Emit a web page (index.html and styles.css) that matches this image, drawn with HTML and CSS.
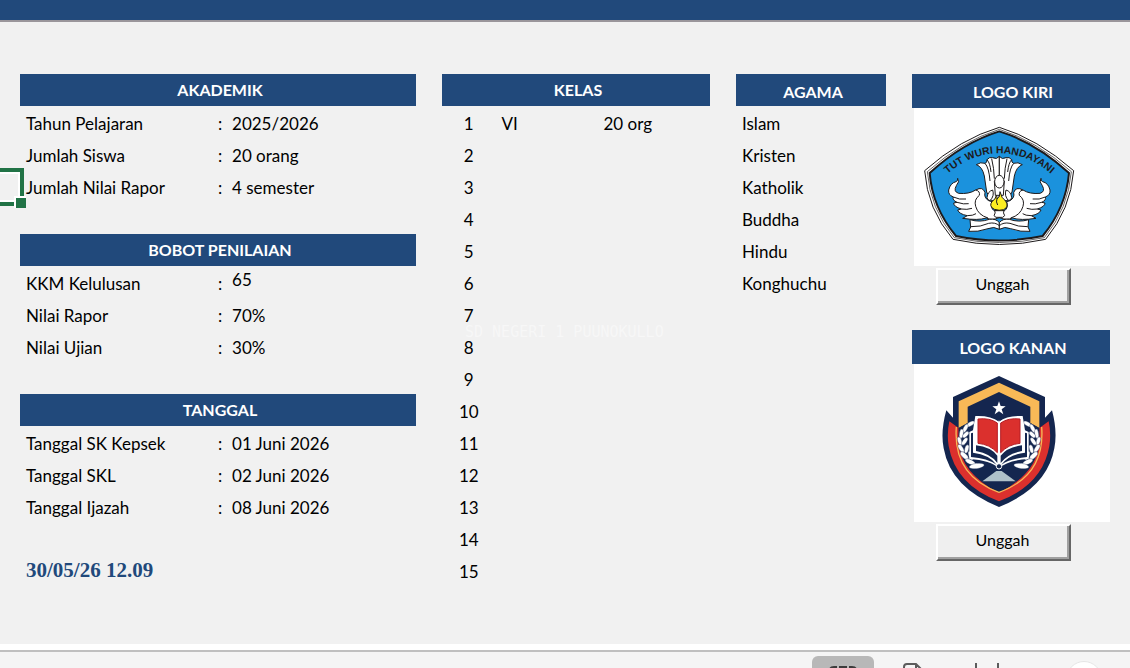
FILE: index.html
```html
<!DOCTYPE html>
<html lang="id">
<head>
  <meta charset="UTF-8" />
  <meta name="viewport" content="width=device-width, initial-scale=1.0"/>
  <title>Data Sekolah</title>
  <link rel="stylesheet" href="styles.css">
</head>
<body>
  <div class="topbar"></div>

  <main class="sheet">
    <div class="watermark">SD NEGERI 1 PUUNOKULLO</div>
    <div class="cell-cursor"><span class="handle"></span></div>

    <div class="column">
      <section>
        <h2>AKADEMIK</h2>
        <table class="data">
          <tr><th>Tahun Pelajaran</th><td class="sep">:</td><td>2025/2026</td></tr>
          <tr><th>Jumlah Siswa</th><td class="sep">:</td><td>20 orang</td></tr>
          <tr><th>Jumlah Nilai Rapor</th><td class="sep">:</td><td>4 semester</td></tr>
        </table>
      </section>
      <section>
        <h2>BOBOT PENILAIAN</h2>
        <table class="data">
          <tr><th>KKM Kelulusan</th><td class="sep">:</td><td class="raised">65</td></tr>
          <tr><th>Nilai Rapor</th><td class="sep">:</td><td>70%</td></tr>
          <tr><th>Nilai Ujian</th><td class="sep">:</td><td>30%</td></tr>
        </table>
      </section>
      <section>
        <h2>TANGGAL</h2>
        <table class="data">
          <tr><th>Tanggal SK Kepsek</th><td class="sep">:</td><td>01 Juni 2026</td></tr>
          <tr><th>Tanggal SKL</th><td class="sep">:</td><td>02 Juni 2026</td></tr>
          <tr><th>Tanggal Ijazah</th><td class="sep">:</td><td>08 Juni 2026</td></tr>
        </table>
      </section>
      <p class="now">30/05/26 12.09</p>
    </div>

    <section>
      <h2>KELAS</h2>
      <table class="data kelas">
        <tr><th>1</th><td>VI</td><td class="total">20 org</td></tr>
        <tr><th>2</th><td></td><td></td></tr>
        <tr><th>3</th><td></td><td></td></tr>
        <tr><th>4</th><td></td><td></td></tr>
        <tr><th>5</th><td></td><td></td></tr>
        <tr><th>6</th><td></td><td></td></tr>
        <tr><th>7</th><td></td><td></td></tr>
        <tr><th>8</th><td></td><td></td></tr>
        <tr><th>9</th><td></td><td></td></tr>
        <tr><th>10</th><td></td><td></td></tr>
        <tr><th>11</th><td></td><td></td></tr>
        <tr><th>12</th><td></td><td></td></tr>
        <tr><th>13</th><td></td><td></td></tr>
        <tr><th>14</th><td></td><td></td></tr>
        <tr><th>15</th><td></td><td></td></tr>
      </table>
    </section>

    <section>
      <h2 class="low">AGAMA</h2>
      <ul class="agama">
        <li>Islam</li>
        <li>Kristen</li>
        <li>Katholik</li>
        <li>Buddha</li>
        <li>Hindu</li>
        <li>Konghuchu</li>
      </ul>
    </section>

    <div class="logos">
      <section>
        <h2 class="low">LOGO KIRI</h2>
        <div class="logo-box">
          <svg viewBox="30 126 588 474" preserveAspectRatio="xMinYMin meet" role="img" aria-label="Tut Wuri Handayani">
            <defs>
              <path id="arc" d="M118,335 Q195,262 286,262 Q377,262 454,335"/>
              <g id="half">
                <!-- tail feathers -->
                <path d="M286,271 Q278,282 266,275 Q256,272 249,281 Q250,290 243,292 Q230,287 217,296 Q235,302 241,330 L248,378 L262,404 L286,404 Z"/>
                <path fill="none" d="M243,292 Q255,305 258,345 M263,278 Q270,306 271,338 M249,281 Q258,290 261,318"/>
                <path d="M266,372 Q251,376 249,395 Q250,402 258,404 Q272,390 266,372 Z"/>
                <!-- wing -->
                <path d="M161,337 Q168,347 157,359 Q147,377 164,382 Q195,385 215,372 Q237,360 243,380 Q239,395 254,404 L264,407 Q258,425 270,434 L286,432 L286,455 Q263,464 247,456 Q222,464 176,457 L190,449 Q165,444 161,432 L172,429 Q149,422 149,411 L159,409 Q144,402 148,393 Q132,387 134,372 Q139,351 156,347 Q163,344 161,337 Z"/>
                <path fill="none" d="M148,393 Q166,402 186,399 M159,409 Q180,416 194,413 M172,429 Q189,432 204,427 M190,449 Q208,449 216,443 M215,372 Q229,375 226,388 Q209,401 215,421 Q222,447 252,456"/>
                <!-- book -->
                <path d="M198,461 Q228,470 256,460 Q276,457 286,470 L286,490 Q270,480 252,488 Q220,499 194,496 L200,483 Z"/>
                <path fill="none" d="M201,482 Q230,483 254,472 Q274,468 286,479"/>
              </g>
            </defs>
            <g class="crest">
              <path fill="#fff" stroke-width="3" d="M286,184 Q400,218 509,314 Q500,430 425,520 Q286,551 147,520 Q70,430 62,314 Q170,218 286,184 Z"/>
              <path fill="#fff" stroke-width="2" d="M286,190 Q398,225 502,317 Q493,428 421,515 Q286,544 151,515 Q78,428 70,317 Q174,225 286,190 Z"/>
              <path fill="#1b92dd" stroke-width="6" d="M286,196 Q396,230 495,321 Q486,425 416,510 Q286,537 156,510 Q85,425 77,321 Q176,230 286,196 Z"/>
              <text class="motto"><textPath href="#arc" startOffset="50%" text-anchor="middle">TUT WURI HANDAYANI</textPath></text>
              <g fill="#fff" stroke-width="3">
                <use href="#half"/>
                <use href="#half" transform="matrix(-1 0 0 1 572 0)"/>
                <path d="M271,345 L274,388 L298,388 L301,345 Z"/>
                <ellipse cx="286" cy="347" rx="14" ry="19"/>
                <path d="M272,434 Q276,440 270,449 L276,454 H296 L302,449 Q296,440 300,434 Z"/>
                <path fill="#fcee21" d="M288,377 Q292,397 305,405 Q316,423 299,431 Q286,435 271,430 Q253,421 265,405 Q274,402 277,388 Q280,393 279,399 Q289,393 288,377 Z"/>
                <path fill="none" d="M279,398 Q275,408 281,417"/>
              </g>
            </g>
          </svg>
        </div>
        <button type="button" class="upload">Unggah</button>
      </section>

      <section>
        <h2 class="low">LOGO KANAN</h2>
        <div class="logo-box">
          <svg viewBox="30 132 588 474" preserveAspectRatio="xMinYMin meet" role="img" aria-label="Logo sekolah">
            <defs>
              <g id="laurel">
                <path fill="none" stroke="#fff" stroke-width="4" d="M205,309 Q166,330 169,370 Q175,423 232,438"/>
                <g fill="#fff" stroke="#14264f" stroke-width="1">
                  <ellipse cx="199" cy="312" rx="14" ry="6" transform="rotate(-30 199 312)"/>
                  <ellipse cx="184" cy="325" rx="14" ry="6" transform="rotate(-62 184 325)"/>
                  <ellipse cx="172" cy="341" rx="14" ry="6" transform="rotate(-82 172 341)"/>
                  <ellipse cx="185" cy="344" rx="12" ry="6" transform="rotate(-45 185 344)"/>
                  <ellipse cx="167" cy="363" rx="13" ry="6" transform="rotate(72 167 363)"/>
                  <ellipse cx="182" cy="364" rx="13" ry="6" transform="rotate(-55 182 364)"/>
                  <ellipse cx="171" cy="385" rx="14" ry="6" transform="rotate(58 171 385)"/>
                  <ellipse cx="188" cy="387" rx="13" ry="6" transform="rotate(-75 188 387)"/>
                  <ellipse cx="181" cy="407" rx="15" ry="7" transform="rotate(42 181 407)"/>
                  <ellipse cx="200" cy="407" rx="14" ry="6" transform="rotate(70 200 407)"/>
                  <ellipse cx="199" cy="426" rx="17" ry="7" transform="rotate(25 199 426)"/>
                  <ellipse cx="218" cy="438" rx="23" ry="8" transform="rotate(-8 218 438)"/>
                </g>
              </g>
              <g id="page">
                <path fill="#fff" d="M285,445 Q260,421 196,417 L196,336 L207,331 L214,288 Q260,286 285,305 Z"/>
                <path fill="#14264f" d="M201,340 L207,338 L207,398 Q256,404 278,434 Q250,415 201,411 Z M216,376 Q260,381 280,407 L280,429 Q260,401 216,393 Z"/>
                <path fill="#db302d" stroke="#b51f27" stroke-width="3" d="M222,297 Q258,293 280,309 L280,398 Q257,373 222,370 Z"/>
              </g>
            </defs>
            <path fill="#14264f" d="M285,168 L423,231 V293 L444,271 Q461,335 451,385 Q430,503 285,561 Q140,503 119,385 Q109,335 127,271 L147,293 V231 Z"/>
            <path fill="#db302d" d="M136,304 L164,324 V365 Q178,466 285,518 Q392,466 406,365 V324 L434,304 Q442,342 436,378 Q416,494 285,544 Q154,494 134,378 Q128,342 136,304 Z"/>
            <path fill="#f8b957" d="M285,188 L406,244 V324 L379,309 V260 L285,216 L191,260 V309 L164,324 V244 Z"/>
            <path fill="none" stroke="#f8b957" stroke-width="4" d="M157,321 Q146,467 285,517 Q424,467 413,321"/>
            <path fill="#14264f" d="M164,324 L191,309 L285,290 L379,309 L406,324 V365 Q399,463 285,514 Q171,463 164,365 Z"/>
            <path fill="#fff" d="M285,244 L290,258 L305,259 L293,268 L298,283 L285,274 L272,283 L277,268 L265,259 L280,258 Z"/>
            <use href="#laurel"/>
            <use href="#laurel" transform="matrix(-1 0 0 1 570 0)"/>
            <use href="#page"/>
            <use href="#page" transform="matrix(-1 0 0 1 570 0)"/>
            <path fill="none" stroke="#fff" stroke-width="3" d="M285,302 V440"/>
            <circle cx="285" cy="439" r="8" fill="#14264f" stroke="#fff" stroke-width="3"/>
            <path fill="#afc1ca" d="M277,453 H293 L335,484 H235 Z"/>
          </svg>
        </div>
        <button type="button" class="upload">Unggah</button>
      </section>
    </div>
  </main>

  <footer class="statusbar">
    <button type="button" class="view active" aria-label="Normal">
      <svg width="28" height="20" viewBox="0 0 28 20"><path fill="#3c3c3c" d="M5,0 H8 V4 H0 Q0,0 5,0 Z M10,0 H18 V4 H10 Z M20,0 H23 Q28,0 28,4 H20 Z M0,4 H8 V12 H0 Z M10,4 H18 V12 H10 Z M20,4 H28 V12 H20 Z"/></svg>
    </button>
    <button type="button" class="view page" aria-label="Tata Letak Halaman">
      <svg width="22" height="24" viewBox="0 0 22 24"><path fill="none" stroke="#5c5c5c" stroke-width="2" d="M1,24 V4 Q1,1 4,1 H13 L20,8 V24 M13,1 V8 H20"/></svg>
    </button>
    <button type="button" class="view break" aria-label="Pratinjau Hentian Halaman">
      <svg width="26" height="24" viewBox="0 0 26 24"><path fill="none" stroke="#5c5c5c" stroke-width="2" d="M2,0 V10 H24 V0"/></svg>
    </button>
    <button type="button" class="zoom-out" aria-label="Perkecil"></button>
  </footer>
</body>
</html>
```
FILE: styles.css
```css
* {
  box-sizing: border-box;
}
body {
  margin: 0;
  height: 100vh;
  display: flex;
  flex-direction: column;
  overflow: hidden;
  font-family: Lato, "Liberation Sans", sans-serif;
  font-size: 17px;
  line-height: 20px;
  color: #000;
  background: #fff;
}
.topbar {
  flex: none;
  height: 22px;
  background: #21497b;
  border-bottom: 2px solid #9a969b;
}
.sheet {
  position: relative;
  flex: 1;
  min-height: 0;
  display: grid;
  grid-template-columns: 396fr 268fr 150fr 198fr;
  gap: 26px;
  align-items: start;
  padding: 52px 20px 0;
  background: #f1f1f1;
}
h2 {
  margin: 0;
  height: 32px;
  padding-left: 4px;
  background: #21497b;
  color: #fff;
  font-size: 16px;
  line-height: 32px;
  text-align: center;
}
h2.low {
  line-height: 36px;
}
.column section {
  margin-bottom: 32px;
}
.data {
  width: 100%;
  table-layout: fixed;
  border-collapse: collapse;
}
.data th, .data td {
  height: 32px;
  padding: 4px 0 0 6px;
  font-weight: normal;
  text-align: left;
}
.data th {
  width: 49%;
}
.data .sep {
  width: 12px;
  padding-left: 4px;
}
.data .raised {
  padding-bottom: 4px;
  padding-top: 0;
}
.data.kelas th {
  width: 20%;
  padding-left: 0;
  text-align: center;
}
.kelas td {
  width: 38%;
}
.kelas .total {
  width: 42%;
}
.now {
  margin: 0;
  padding-left: 6px;
  font-family: "Liberation Serif", serif;
  font-size: 21px;
  font-weight: bold;
  line-height: 32px;
  color: #21497b;
}
.agama {
  margin: 0;
  padding: 0 0 0 6px;
  list-style: none;
}
.agama li {
  height: 32px;
  padding-top: 4px;
  line-height: 28px;
}

/* logo column */
.logos {
  display: grid;
  gap: 25px;
}
.logos h2 {
  height: 34px;
}
.logo-box {
  height: 158px;
  margin-left: 2px;
  background: #fff;
}
.logo-box svg {
  display: block;
  width: 100%;
  height: 100%;
}
.crest {
  stroke: #1d1a1b;
  stroke-linejoin: round;
}
.motto {
  fill: #1d1a1b;
  stroke: none;
  font-family: "Liberation Sans", sans-serif;
  font-size: 31px;
  font-weight: bold;
}
.upload {
  display: block;
  width: 135px;
  height: 37px;
  margin: 2px 0 0 24px;
  padding: 0 2px 5px 0;
  border: 2px solid;
  border-color: #fff #666 #666 #fff;
  box-shadow: inset -2px -2px #a0a0a0;
  background: #efefef;
  font: inherit;
  font-size: 16px;
  color: #000;
}

/* selected cell, partly off the left edge */
.cell-cursor {
  position: absolute;
  left: 0;
  top: 146px;
  width: 24px;
  height: 38px;
  border: 4px solid #217346;
  border-left: 0;
  box-shadow: inset -2px 0 #fff, inset 0 2px #fff, inset 0 -2px #fff;
}
.handle {
  position: absolute;
  right: -6px;
  bottom: -6px;
  width: 12px;
  height: 12px;
  border: solid #fff;
  border-width: 2px 0 0 2px;
  background: #217346;
}
.watermark {
  position: absolute;
  left: 465px;
  top: 303px;
  font-family: "DejaVu Sans Mono", monospace;
  font-size: 15px;
  line-height: 14px;
  color: #f7f7f7;
}

.statusbar {
  flex: none;
  display: flex;
  height: 18px;
  margin-top: 6px;
  padding: 4px 46px 0 0;
  justify-content: flex-end;
  align-items: flex-start;
  border-top: 2px solid #c0c0c0;
  background: #f5f5f5;
  overflow: hidden;
}
.view {
  flex: none;
  height: 32px;
  padding: 6px 0 0;
  border: 0;
  background: none;
}
.view svg {
  display: block;
  margin: auto;
}
.active {
  width: 62px;
  padding-top: 8px;
  border-radius: 6px;
  background: #b8b8b8;
}
.page {
  width: 80px;
}
.break {
  width: 66px;
  margin-right: 46px;
}
.zoom-out {
  width: 36px;
  height: 36px;
  margin-top: 5px;
  margin-right: -18px;
  border: 1px solid #e6e6e6;
  border-radius: 50%;
  background: #fff;
}
```
